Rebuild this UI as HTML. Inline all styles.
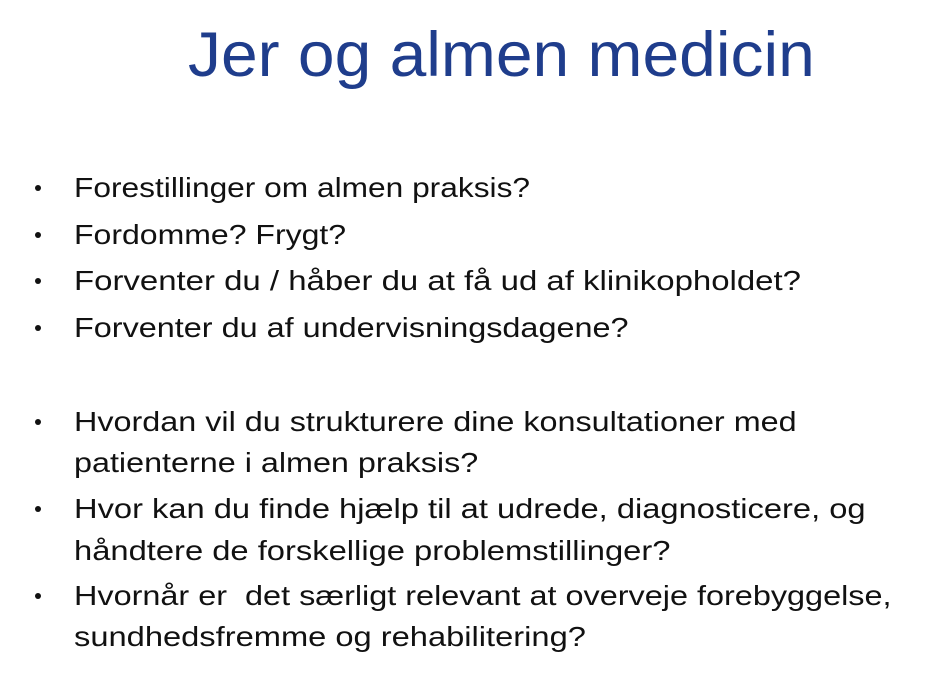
<!DOCTYPE html>
<html><head><meta charset="utf-8"><style>
html,body{margin:0;padding:0;background:#fff;}
body{width:942px;height:682px;position:relative;overflow:hidden;font-family:"Liberation Sans",sans-serif;}
.t{position:absolute;left:188px;top:24px;font-size:63px;color:#1f3d8c;white-space:nowrap;line-height:1;transform-origin:left top;}
.l{position:absolute;left:74px;font-size:28px;color:#111;white-space:nowrap;line-height:1;transform-origin:left top;}
.b{position:absolute;left:35px;width:6px;height:6px;border-radius:50%;background:#111;}
</style></head><body>
<div class="t">Jer og almen medicin</div>

<div class="b" style="top:185px"></div><div class="l" style="top:174px">Forestillinger om almen praksis?</div>
<div class="b" style="top:232px"></div><div class="l" style="top:221px">Fordomme? Frygt?</div>
<div class="b" style="top:278px"></div><div class="l" style="top:267px">Forventer du / håber du at få ud af klinikopholdet?</div>
<div class="b" style="top:325px"></div><div class="l" style="top:314px">Forventer du af undervisningsdagene?</div>

<div class="b" style="top:419px"></div><div class="l" style="top:408px">Hvordan vil du strukturere dine konsultationer med</div>
<div class="l" style="top:449px">patienterne i almen praksis?</div>
<div class="b" style="top:506px"></div><div class="l" style="top:495px">Hvor kan du finde hjælp til at udrede, diagnosticere, og</div>
<div class="l" style="top:537px">håndtere de forskellige problemstillinger?</div>
<div class="b" style="top:593px"></div><div class="l" style="top:582px">Hvornår er &nbsp;det særligt relevant at overveje forebyggelse,</div>
<div class="l" style="top:623px">sundhedsfremme og rehabilitering?</div>
<script>
var w={0:456,1:272,2:727,3:554,4:723,5:404,6:792,7:597,8:818,9:512};
document.querySelectorAll('.l').forEach(function(e,i){var r=e.scrollWidth;if(w[i]&&r)e.style.transform='scaleX('+(w[i]/r)+')';});
var t=document.querySelector('.t');t.style.transform='scaleX('+(627/t.scrollWidth)+')';
</script>
</body></html>
